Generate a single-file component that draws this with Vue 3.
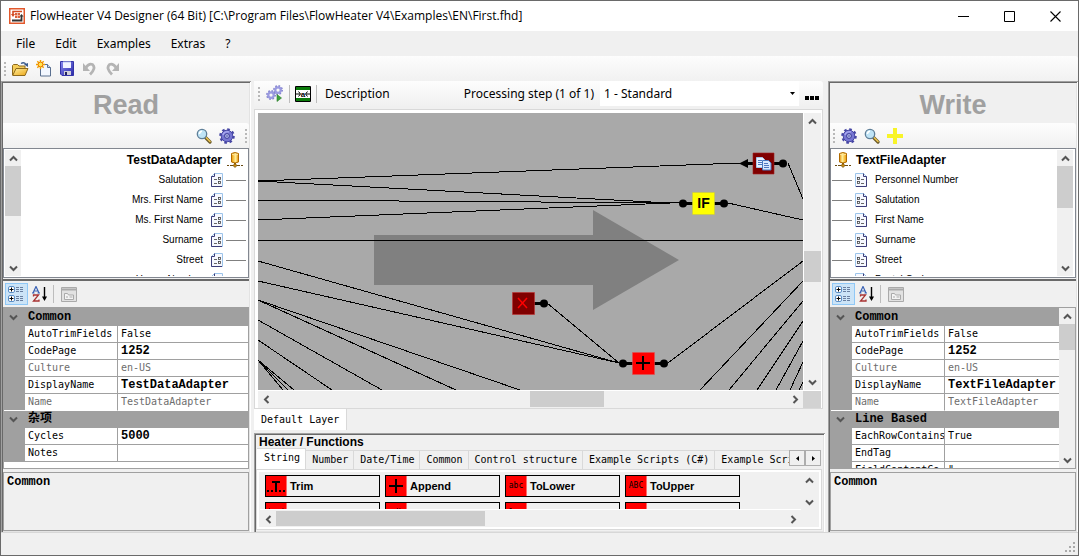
<script setup>
import { ref } from 'vue'

const menus = ['File', 'Edit', 'Examples', 'Extras', '?']

const panels = [
  {
    side: 'read',
    title: 'Read',
    adapter: 'TestDataAdapter',
    fields: ['Salutation', 'Mrs. First Name', 'Ms. First Name', 'Surname', 'Street', 'House Number'],
    groups: [
      {
        name: 'Common',
        rows: [
          { key: 'AutoTrimFields', value: 'False' },
          { key: 'CodePage', value: '1252', bold: true },
          { key: 'Culture', value: 'en-US', muted: true },
          { key: 'DisplayName', value: 'TestDataAdapter', bold: true },
          { key: 'Name', value: 'TestDataAdapter', muted: true }
        ]
      },
      {
        name: '杂项',
        rows: [
          { key: 'Cycles', value: '5000', bold: true },
          { key: 'Notes', value: '' }
        ]
      }
    ]
  },
  {
    side: 'write',
    title: 'Write',
    adapter: 'TextFileAdapter',
    fields: ['Personnel Number', 'Salutation', 'First Name', 'Surname', 'Street', 'Postal Code'],
    scroll: true,
    groups: [
      {
        name: 'Common',
        rows: [
          { key: 'AutoTrimFields', value: 'False' },
          { key: 'CodePage', value: '1252', bold: true },
          { key: 'Culture', value: 'en-US', muted: true },
          { key: 'DisplayName', value: 'TextFileAdapter', bold: true },
          { key: 'Name', value: 'TextFileAdapter', muted: true }
        ]
      },
      {
        name: 'Line Based',
        rows: [
          { key: 'EachRowContains', value: 'True' },
          { key: 'EndTag', value: '' },
          { key: 'FieldContentCo', value: '"' }
        ]
      }
    ]
  }
]

const wires = [
  [0, 68, 482, 50], [0, 68, 412, 90], [0, 87, 424, 90], [0, 107, 412, 90], [0, 127, 545, 127],
  [0, 148, 361, 250], [0, 168, 361, 250], [0, 187, 262, 277], [0, 187, 198, 277],
  [0, 207, 124, 277], [0, 227, 74, 277], [0, 247, 36, 277], [0, 247, 30, 277], [0, 247, 25, 277],
  [289, 190, 361, 250], [470, 90, 545, 107], [530, 50, 545, 86], [410, 250, 545, 148],
  [442, 277, 545, 168], [471, 277, 545, 188], [499, 277, 545, 208], [518, 277, 545, 228],
  [532, 277, 545, 249], [541, 277, 545, 269]
]

const tabs = ['String', 'Number', 'Date/Time', 'Common', 'Control structure', 'Example Scripts (C#)', 'Example Scripts (VB)']
const activeTab = ref('String')

const functions = [
  { icon: 'dots', label: 'Trim' },
  { icon: 'plus', label: 'Append' },
  { icon: 'abc', label: 'ToLower' },
  { icon: 'ABC', label: 'ToUpper' },
  { icon: '(..)', label: 'SubString' },
  { icon: 'a/b', label: 'Replace' },
  { icon: 'len', label: 'Length' },
  { icon: '', label: 'Concat' }
]
</script>

<template>
  <div class="window">
    <svg class="defs" aria-hidden="true">
      <defs>
        <linearGradient id="g-folder" x1="0" y1="0" x2="1" y2="1">
          <stop offset="0" stop-color="#fff0a0" /><stop offset="1" stop-color="#eba414" />
        </linearGradient>
        <linearGradient id="g-blue" x1="0" y1="0" x2="1" y2="1">
          <stop offset="0" stop-color="#8a8af0" /><stop offset="1" stop-color="#2828a8" />
        </linearGradient>
        <linearGradient id="g-gold" x1="0" y1="0" x2="1" y2="0">
          <stop offset="0" stop-color="#e88a00" /><stop offset=".4" stop-color="#fff09a" /><stop offset="1" stop-color="#f09a00" />
        </linearGradient>
      </defs>
      <symbol id="i-up" viewBox="0 0 9 7"><path d="M1 5.500 4.500 2 8 5.500" fill="none" stroke="#555" stroke-width="2" /></symbol>
      <symbol id="i-down" viewBox="0 0 9 7"><path d="M1 1.500 4.500 5 8 1.500" fill="none" stroke="#555" stroke-width="2" /></symbol>
      <symbol id="i-left" viewBox="0 0 7 9"><path d="M5.500 1 2 4.500 5.500 8" fill="none" stroke="#555" stroke-width="2" /></symbol>
      <symbol id="i-right" viewBox="0 0 7 9"><path d="M1.500 1 5 4.500 1.500 8" fill="none" stroke="#555" stroke-width="2" /></symbol>
      <symbol id="i-gear" viewBox="0 0 16 16">
        <circle cx="8" cy="8" r="6.600" fill="none" stroke="#4646a4" stroke-width="2.400" stroke-dasharray="2.600 2.584" />
        <circle cx="8" cy="8" r="5.800" fill="#7676d2" stroke="#4646a4" stroke-width="1" />
        <path d="M4 7a4.500 4.500 0 0 1 6-3" fill="none" stroke="#a8a8f0" stroke-width="1.500" />
        <circle cx="8" cy="8" r="2.400" fill="#b8c0f0" stroke="#3c3c96" stroke-width="1" />
        <circle cx="8" cy="8" r=".8" fill="#3c3c96" />
      </symbol>
      <symbol id="i-gear-light" viewBox="0 0 16 16">
        <circle cx="8" cy="8" r="6.200" fill="none" stroke="#8080cc" stroke-width="3.400" stroke-dasharray="2.440 2.430" />
        <circle cx="8" cy="8" r="4.400" fill="none" stroke="#9a9ae0" stroke-width="3.600" />
      </symbol>
      <symbol id="i-search" viewBox="0 0 16 16">
        <path d="m9.500 9.500 4.500 4.500" stroke="#6b5a28" stroke-width="3.200" stroke-linecap="round" />
        <path d="m10 9.500 4 4" stroke="#f0c850" stroke-width="1.500" stroke-linecap="round" />
        <circle cx="6" cy="6" r="4.700" fill="#bfe4f6" stroke="#5f7f98" stroke-width="1.300" />
        <path d="M3.500 6A2.600 2.600 0 0 1 6 3.300" fill="none" stroke="#fff" stroke-width="1.600" />
      </symbol>
      <symbol id="i-db" viewBox="0 0 16 16">
        <path d="M0 13.500h2M3 13.500h10M14 13.500h2" stroke="#6a4a10" />
        <path d="M8 10v4" stroke="#8a5a00" stroke-width="2" />
        <path d="m6 13.500 2-2 2 2-2 2z" fill="#c88a10" stroke="#6a4a10" stroke-width=".7" />
        <path d="M4.500 1.500Q8-.5 11.500 1.500v8.500Q8 12 4.500 10z" fill="url(#g-gold)" stroke="#b06a00" />
        <path d="M5 2.200Q8 4 11 2.200" fill="none" stroke="#ffe9a0" />
      </symbol>
      <symbol id="i-field" viewBox="0 0 12 14">
        <path d="M.5.500h8l3 3v10H.5z" fill="#f6f8ff" stroke="#9cc4ea" />
        <path d="M8.500.500v3h3v10H1" fill="none" stroke="#3c3c78" />
        <rect x="2.500" y="4.500" width="2" height="2" fill="none" stroke="#444" stroke-width=".8" />
        <rect x="2.500" y="8.500" width="2" height="2" fill="none" stroke="#444" stroke-width=".8" />
        <path d="M6 6.500h3M6 10.500h3" stroke="#666" />
      </symbol>
      <symbol id="i-cat" viewBox="0 0 18 16">
        <rect x=".5" y=".5" width="6" height="6" rx="1.500" fill="#fff" stroke="#5b8fc8" />
        <path d="M1.500 3.500h4M3.500 1.500v4" stroke="#000" />
        <rect x=".5" y="9.500" width="6" height="6" rx="1.500" fill="#fff" stroke="#5b8fc8" />
        <path d="M1.500 12.500h4M3.500 10.500v4" stroke="#000" />
        <path d="M8 1.500h8M8 3.500h8M8 5.500h8M8 10.500h8M8 12.500h8M8 14.500h8" stroke="#6a7fa0" stroke-dasharray="3 1" />
      </symbol>
      <symbol id="i-az" viewBox="0 0 16 16">
        <path d="M1 7 4 .5 7 7M2 5h4M0 7h2.500M5.500 7H8" fill="none" stroke="#3a62b4" stroke-width="1.200" />
        <path d="M1.500 10.500V9h5L1.500 15h5.500v-1.500" fill="none" stroke="#a83232" stroke-width="1.300" />
        <path d="M12.500 1v12" stroke="#000" stroke-width="1.400" /><path d="M10 10.500h5L12.500 15z" />
      </symbol>
      <symbol id="i-pages" viewBox="0 0 16 15">
        <path d="M.5.500h15v14H.5z" fill="#e2e2e2" stroke="#aaa" /><path d="M1 2.500h14" stroke="#aaa" stroke-width="2" />
        <path d="M3.500 12.500v-6h3l1 1.500h5v4.500z" fill="#f4f4f4" stroke="#aaa" /><path d="M5 10h2M8.500 10h3" stroke="#aaa" />
      </symbol>
    </svg>

    <header class="titlebar">
      <svg class="logo" width="16" height="16" viewBox="0 0 16 16">
        <rect x=".75" y=".75" width="14.500" height="14.500" fill="#fff" stroke="#e2582c" stroke-width="1.500" />
        <path d="M4 6.500v-3h9" fill="none" stroke="#d44a22" stroke-width="1.600" /><path d="M2 6h4L4 9z" fill="#d44a22" />
        <path d="M3 12.500h9.500V8" fill="none" stroke="#333" stroke-width="1.800" /><path d="M10.500 8.500 12.500 6l2 2.500z" fill="#333" />
        <rect x="6" y="5" width="5" height="5" fill="#d9613e" /><path d="M6 7.500h5M8.500 5v5" stroke="#f6c8b6" stroke-width=".8" />
      </svg>
      <h1>FlowHeater V4 Designer (64 Bit) [C:\Program Files\FlowHeater V4\Examples\EN\First.fhd]</h1>
      <div class="controls">
        <button type="button" aria-label="Minimize"><svg width="11" height="11"><path d="M0 5.500h11" stroke="#000" /></svg></button>
        <button type="button" aria-label="Maximize"><svg width="11" height="11"><path d="M.5.500h10v10H.5z" fill="none" stroke="#000" /></svg></button>
        <button type="button" aria-label="Close"><svg width="11" height="11"><path d="m.5.500 10 10m0-10-10 10" stroke="#000" stroke-width="1.100" /></svg></button>
      </div>
    </header>

    <nav class="menubar">
      <button v-for="m in menus" :key="m" type="button">{{ m }}</button>
    </nav>

    <div class="strip main-strip">
      <i class="grip"></i>
      <button type="button" aria-label="Open">
        <svg width="17" height="16" viewBox="0 0 17 16">
          <path d="M.5 14V4.500l1-1h4l1.500 1.500h6v3" fill="#f4cc58" stroke="#8e6a1c" />
          <path d="M.7 14.500 4 7.500h12l-3 7z" fill="url(#g-folder)" stroke="#8e6a1c" />
          <path d="M9 2.500Q12 .5 14 3.500" fill="none" stroke="#3a5a8c" stroke-width="1.300" /><path d="M12 3.500 16 2v4z" fill="#3a5a8c" />
        </svg>
      </button>
      <button type="button" aria-label="New">
        <svg width="16" height="17" viewBox="0 0 16 17">
          <path d="M4.500 4.500h7l3 3v8.500h-10z" fill="#f2f7ff" stroke="#5a7090" /><path d="M11.500 4.500v3h3" fill="#c8d8ec" stroke="#5a7090" />
          <path d="M4.500 0v9M0 4.500h9M1.300 1.300l6.400 6.400M7.700 1.300 1.300 7.700" stroke="#f0a400" stroke-width="1.500" /><circle cx="4.500" cy="4.500" r="2.400" fill="#ffe850" stroke="#f07800" />
        </svg>
      </button>
      <button type="button" aria-label="Save">
        <svg width="14" height="15" viewBox="0 0 14 15">
          <path d="M.5.500h13v14H2l-1.500-1.500z" fill="url(#g-blue)" stroke="#3434a8" /><path d="M3 1h8v6H3z" fill="#f2f4ff" /><path d="M3 1h8" stroke="#b8c4f0" />
          <path d="M4 10h7v4H4z" fill="#d0d0d8" /><path d="M5 11h2v3H5z" fill="#222260" />
        </svg>
      </button>
      <button type="button" aria-label="Undo" disabled>
        <svg width="13" height="14" viewBox="0 0 13 14"><path d="M3 5.500Q6 1 9.500 2.500 13.500 6 7 12.500" fill="none" stroke="#b4b4b4" stroke-width="2.800" /><path d="M0 1v8h7z" fill="#b4b4b4" /></svg>
      </button>
      <button type="button" aria-label="Redo" disabled>
        <svg width="13" height="14" viewBox="0 0 13 14"><path d="M10 5.500Q7 1 3.500 2.500-.5 6 6 12.500" fill="none" stroke="#b4b4b4" stroke-width="2.800" /><path d="M13 1v8H6z" fill="#b4b4b4" /></svg>
      </button>
    </div>

    <main class="body">
      <section v-for="p in panels" :key="p.side" class="panel" :class="p.side">
        <h2>{{ p.title }}</h2>
        <div class="strip side-strip">
          <i class="grip"></i>
          <button type="button" aria-label="Configure"><svg width="16" height="16"><use href="#i-gear" /></svg></button>
          <button type="button" aria-label="Search"><svg width="16" height="16"><use href="#i-search" /></svg></button>
          <button v-if="p.side === 'write'" type="button" aria-label="Add"><svg width="16" height="16"><path d="M8 0v16M0 8h16" stroke="#f8f428" stroke-width="4" /></svg></button>
        </div>
        <div class="fields">
          <ul>
            <li class="adapter"><svg width="16" height="16"><use href="#i-db" /></svg><span>{{ p.adapter }}</span></li>
            <li v-for="f in p.fields" :key="f"><i class="wire"></i><svg width="12" height="14"><use href="#i-field" /></svg><span>{{ f }}</span></li>
          </ul>
          <div class="vscroll">
            <button type="button" aria-label="Scroll up"><svg width="9" height="7"><use href="#i-up" /></svg></button>
            <div class="track"><i class="thumb"></i></div>
            <button type="button" aria-label="Scroll down"><svg width="9" height="7"><use href="#i-down" /></svg></button>
          </div>
        </div>
        <div class="prop-strip">
          <button type="button" class="on" aria-label="Categorized"><svg width="18" height="16"><use href="#i-cat" /></svg></button>
          <button type="button" aria-label="Alphabetical"><svg width="16" height="16"><use href="#i-az" /></svg></button>
          <i class="sep"></i>
          <button type="button" aria-label="Property pages" disabled><svg width="16" height="15"><use href="#i-pages" /></svg></button>
        </div>
        <div class="props">
          <div class="props-view">
            <table>
              <colgroup><col class="c-gutter" /><col class="c-key" /><col /></colgroup>
              <tbody v-for="g in p.groups" :key="g.name">
                <tr class="group">
                  <td><svg width="9" height="7"><use href="#i-down" /></svg></td>
                  <th colspan="2" scope="rowgroup">{{ g.name }}</th>
                </tr>
                <tr v-for="r in g.rows" :key="r.key" :class="{ muted: r.muted }">
                  <td class="gutter"></td>
                  <th scope="row">{{ r.key }}</th>
                  <td :class="{ bold: r.bold }">{{ r.value }}</td>
                </tr>
              </tbody>
            </table>
          </div>
          <div v-if="p.scroll" class="vscroll">
            <button type="button" aria-label="Scroll up"><svg width="9" height="7"><use href="#i-up" /></svg></button>
            <div class="track"><i class="thumb"></i></div>
            <button type="button" aria-label="Scroll down"><svg width="9" height="7"><use href="#i-down" /></svg></button>
          </div>
        </div>
        <div class="hint">Common</div>
      </section>

      <section class="center">
        <div class="strip center-strip">
          <i class="grip"></i>
          <button type="button" aria-label="Run">
            <svg width="18" height="17" viewBox="0 0 18 17">
              <svg x="0" y="5" width="10" height="10"><use href="#i-gear-light" /></svg>
              <svg x="7" y="0" width="10" height="10"><use href="#i-gear-light" /></svg>
              <path d="m11 9.500 4.500 3.500-4.500 3.500z" fill="#3ca03c" stroke="#2a7a2a" stroke-width=".6" />
            </svg>
          </button>
          <i class="sep"></i>
          <button type="button" aria-label="Parameter">
            <svg width="16" height="16" viewBox="0 0 16 16">
              <path d="M.5.500h15v15H.5z" fill="#fff" stroke="#000" /><path d="M1 2.500h14M1 13.500h14" stroke="#0a7a0a" stroke-width="3" />
              <path d="M1 8h4M11 8h4M3.500 5.500 5.500 8l-2 2.500M12.500 5.500l-2 2.500 2 2.500" fill="none" stroke="#000" />
              <text x="8" y="10.500" text-anchor="middle" font-size="8" font-weight="bold" font-family="Liberation Sans, sans-serif">a</text>
            </svg>
          </button>
          <i class="sep"></i>
          <button type="button" class="text">Description</button>
          <label for="step">Processing step (1 of 1)</label>
          <div class="combo">
            <select id="step"><option>1 - Standard</option></select>
            <svg width="5" height="3"><path d="M0 0h5L2.500 3z" /></svg>
          </div>
          <button type="button" class="more" aria-label="More"><svg width="14" height="4"><path d="M0 0h4v4H0zM5 0h4v4H5zM10 0h4v4h-4z" /></svg></button>
        </div>

        <div class="designer">
          <div class="canvas">
            <svg width="545" height="277">
              <path d="M116 122H335V97L421 147 335 197V172H116z" fill="#808080" />
              <g stroke="#000" shape-rendering="crispEdges">
                <line v-for="(w, i) in wires" :key="i" :x1="w[0]" :y1="w[1]" :x2="w[2]" :y2="w[3]" />
              </g>
              <g stroke="#000" stroke-width="3">
                <path d="M490 50.500h36M425 90.500h40M276 190.500h10M364 250.500h41" />
              </g>
              <circle cx="525" cy="50.500" r="4" /><path d="m481 50.500 9-4.500v9z" />
              <circle cx="425" cy="90.500" r="4" /><circle cx="466" cy="90.500" r="4" />
              <circle cx="286" cy="190.500" r="4" />
              <circle cx="365" cy="250.500" r="4" /><circle cx="406" cy="250.500" r="4" />
              <g stroke-opacity=".6">
                <path d="M495 40h21v21h-21z" fill="#800000" stroke="#a02020" />
                <path d="M434.500 79.500h22v22h-22z" fill="#ff0" stroke="#c8c840" />
                <path d="M254.500 179.500h22v22h-22z" fill="#800000" stroke="#c03030" />
                <path d="M374.500 239.500h22v22h-22z" fill="#f00" stroke="#e05050" />
              </g>
              <path d="M498.500 44.500h6l2 2v8h-8z" fill="#e8f2ff" stroke="#a8c4e8" /><path d="M500 47.500h4M500 49.500h5M500 51.500h5" stroke="#5078c0" />
              <path d="M504.500 47.500h6l2.500 2.500v7h-8.500z" fill="#d8e8ff" stroke="#4878c0" /><path d="M506 50.500h4M506 52.500h5M506 54.500h5" stroke="#5078c0" />
              <text x="445.500" y="95" text-anchor="middle" class="if">IF</text>
              <path d="m260 185 9 10m0-10-9 10" stroke="#f00" stroke-width="1.500" />
              <path d="M385 243v14M378 250h14" stroke="#000" stroke-width="2" />
            </svg>
          </div>
          <div class="vscroll">
            <button type="button" aria-label="Scroll up"><svg width="9" height="7"><use href="#i-up" /></svg></button>
            <div class="track"><i class="thumb"></i></div>
            <button type="button" aria-label="Scroll down"><svg width="9" height="7"><use href="#i-down" /></svg></button>
          </div>
          <div class="hscroll">
            <button type="button" aria-label="Scroll left"><svg width="7" height="9"><use href="#i-left" /></svg></button>
            <div class="track"><i class="thumb"></i></div>
            <button type="button" aria-label="Scroll right"><svg width="7" height="9"><use href="#i-right" /></svg></button>
          </div>
          <i class="corner"></i>
        </div>
        <div class="layers"><button type="button">Default Layer</button></div>

        <div class="heater">
          <h3>Heater / Functions</h3>
          <div class="tabrow">
            <div class="tabs" role="tablist">
              <button v-for="t in tabs" :key="t" type="button" role="tab" :aria-selected="t === activeTab" :class="{ active: t === activeTab }" @click="activeTab = t">{{ t }}</button>
            </div>
            <div class="spin">
              <button type="button" aria-label="Previous tabs"><svg width="3" height="5"><path d="M3 0v5L0 2.500z" /></svg></button>
              <button type="button" aria-label="More tabs"><svg width="3" height="5"><path d="M0 0v5l3-2.500z" /></svg></button>
            </div>
          </div>
          <div class="page">
            <div class="functions">
              <button v-for="f in functions" :key="f.label" type="button">
                <span class="tile">
                  <svg v-if="f.icon === 'plus'" width="14" height="14"><path d="M7 0v14M0 7h14" stroke="#000" stroke-width="2" /></svg>
                  <svg v-else-if="f.icon === 'dots'" width="18" height="12"><path d="M5 2h8M9 2v10" stroke="#000" stroke-width="2" /><path d="M0 10h2v2H0zM4 10h2v2H4zM12 10h2v2h-2zM16 10h2v2h-2z" /></svg>
                  <template v-else>{{ f.icon }}</template>
                </span>
                <span>{{ f.label }}</span>
              </button>
            </div>
            <div class="vscroll">
              <button type="button" aria-label="Scroll up"><svg width="9" height="7"><use href="#i-up" /></svg></button>
              <div class="track"></div>
              <button type="button" aria-label="Scroll down"><svg width="9" height="7"><use href="#i-down" /></svg></button>
            </div>
            <div class="hscroll">
              <button type="button" aria-label="Scroll left"><svg width="7" height="9"><use href="#i-left" /></svg></button>
              <div class="track"><i class="thumb"></i></div>
              <button type="button" aria-label="Scroll right"><svg width="7" height="9"><use href="#i-right" /></svg></button>
            </div>
          </div>
        </div>
      </section>
    </main>

    <footer class="status">
      <svg width="11" height="11"><path d="M8 0h2v2H8zM4 4h2v2H4zM8 4h2v2H8zM0 8h2v2H0zM4 8h2v2H4zM8 8h2v2H8z" fill="#aaa" /></svg>
    </footer>
  </div>
</template>

<style>
html, body { margin: 0; background: #f0f0f0; }
</style>

<style scoped>
.window, .window * { box-sizing: border-box; }
.window {
  --mono: "DejaVu Sans Mono", "Noto Sans CJK SC", monospace;
  --mono-bold: "Liberation Mono", "Noto Sans CJK SC", monospace;
  --sans: "Liberation Sans", "Noto Sans CJK SC", sans-serif;
  display: flex; flex-direction: column; height: 100vh;
  border: 1px solid #6a6a6a; background: #f0f0f0; color: #000;
  font: 12px/16px "Noto Sans", "Noto Sans CJK SC", sans-serif;
}
.defs { position: absolute; width: 0; height: 0; }
button { margin: 0; padding: 0; border: 0; background: none; font: inherit; color: inherit; display: flex; align-items: center; justify-content: center; flex: none; white-space: nowrap; }
svg { display: block; flex: none; }
h1, h2, h3, ul { margin: 0; padding: 0; font-weight: normal; list-style: none; }

.titlebar { display: flex; align-items: center; height: 30px; padding-left: 8px; background: #fff; flex: none; }
.titlebar h1 { flex: 1; margin-left: 5px; font: 12px/16px "Open Sans", "Noto Sans", sans-serif; white-space: nowrap; overflow: hidden; }
.controls { display: flex; }
.controls button { width: 46px; height: 30px; }
.menubar { display: flex; align-items: center; height: 25px; padding-left: 7px; flex: none; }
.menubar button { padding: 0 12px 0 8px; height: 25px; }

.strip { display: flex; align-items: center; height: 25px; flex: none; background: linear-gradient(#fdfdfd, #f1f1f1); border-radius: 0 3px 3px 0; }
.grip { width: 2px; height: 14px; flex: none; background: repeating-linear-gradient(#b8b8b8 0 2px, transparent 2px 4px); }
.sep { width: 1px; height: 18px; background: #bdbdbd; flex: none; }
.main-strip { padding-left: 3px; }
.main-strip button { width: 23px; }
.main-strip .grip { margin-right: 3px; }

.body { flex: 1; min-height: 0; display: grid; grid-template-columns: 250px minmax(0, 1fr) 250px; gap: 3px; }
.panel, .heater {
  padding: 2px; border: 0; min-height: 0;
  box-shadow: inset 1px 1px 0 #a0a0a0, inset -1px -1px 0 #fff, inset 2px 2px 0 #696969, inset -2px -2px 0 #e3e3e3;
}
.panel { display: flex; flex-direction: column; min-width: 0; grid-row: 1; grid-column: 1; }
.panel.write { grid-column: 3; }
.center { grid-row: 1; grid-column: 2; }
.panel h2 { height: 40px; padding-top: 2px; text-align: center; font: bold 27px/40px var(--sans); color: #a0a0a0; flex: none; }
.side-strip { padding-left: 3px; }
.side-strip .grip { margin-right: 2px; }
.side-strip button { width: 23px; }
.read .side-strip { flex-direction: row-reverse; padding: 0 2px 0 0; }
.read .side-strip .grip { margin: 0 0 0 7px; }

.fields { display: flex; height: 130px; flex: none; padding: 1px 2px 1px 1px; border: 1px solid #828790; background: #fff; }
.read .fields { flex-direction: row-reverse; }
.fields ul { flex: 1; overflow: hidden; font: 10px/20px var(--sans); }
.fields li { display: flex; align-items: center; height: 20px; white-space: nowrap; }
.read .fields li { flex-direction: row-reverse; }
.read .fields li svg { transform: scaleX(-1); }
.fields .wire { width: 20px; height: 1px; background: #808080; margin-right: 3px; }
.fields li span { margin: 0 8px; }
.read .fields .wire { margin: 0 0 0 3px; }
.fields .adapter { font-size: 12px; font-weight: bold; padding: 0 3px; }
.fields .adapter span { margin: 0 5px; }

.vscroll { display: flex; flex-direction: column; width: 16px; background: #f0f0f0; flex: none; }
.vscroll button { height: 16px; }
.hscroll { display: flex; height: 16px; background: #f0f0f0; }
.hscroll button { width: 16px; }
.track { flex: 1; min-width: 0; min-height: 0; }
.thumb { display: block; background: #cdcdcd; }
.read .fields .thumb { height: 50px; }
.write .fields .thumb { height: 42px; }
.props .thumb { height: 26px; }

.prop-strip { display: flex; align-items: center; height: 28px; flex: none; padding: 0 2px; border-top: 2px solid #696969; margin-top: 1px; }
.prop-strip button { width: 23px; height: 22px; }
.prop-strip .on { background: #cce4f7; border: 1px solid #90c8f6; }
.prop-strip .sep { margin: 0 3px 0 2px; }

.props { flex: 1; min-height: 0; display: flex; border: 1px solid #a0a0a0; background: #fff; }
.props-view { flex: 1; min-width: 0; overflow: hidden; border-top: 1px solid #a0a0a0; }
table { width: 100%; table-layout: fixed; border-spacing: 0; font: 10px/16px var(--mono); }
.c-gutter { width: 21px; }
.c-key { width: 93px; }
tr { height: 17px; }
th, td { padding: 0 0 0 3px; text-align: left; font-weight: normal; white-space: nowrap; overflow: hidden; border-bottom: 1px solid #a0a0a0; height: 17px; line-height: 16px; }
th { border-right: 1px solid #a0a0a0; }
.gutter, .group td, .group th { background: #a0a0a0; }
.group td { padding-left: 5px; }
.group th, .bold { font: bold 12px/16px var(--mono-bold); }
.muted { color: #6d6d6d; }
tbody:not(:last-child) tr:last-child td, tbody:not(:last-child) tr:last-child th { border-bottom-color: #fff; }
.hint { height: 59px; margin-top: 3px; padding: 1px 3px; border: 1px solid #a0a0a0; flex: none; font: bold 12px/16px var(--mono-bold); }

.center { display: flex; flex-direction: column; min-width: 0; }
.center-strip { padding-left: 4px; margin-right: 2px; height: 25px; }
.center-strip .grip { margin-right: 6px; }
.center-strip .sep { margin: 0 5px; }
.center-strip .text { margin: 0 auto 0 3px; }
.combo { position: relative; width: 199px; height: 25px; margin: 0 6px; background: #fff; }
.combo select { width: 100%; height: 100%; padding: 0 4px; border: 0; background: none; appearance: none; font: inherit; color: inherit; }
.combo svg { position: absolute; right: 4px; top: 11px; }
.more { padding: 9px 4px 0 0; }

.designer { flex: 1; min-height: 0; margin: 3px 2px 0 0; padding: 3px 1px 0 3px; display: grid; grid-template: minmax(0, 1fr) 17px / minmax(0, 1fr) 18px; row-gap: 1px; border: 1px solid #d9d9d9; background: #fff; }
.canvas { background: #a9a9a9; overflow: hidden; }
.if { font: bold 14px var(--sans); }
.designer .vscroll { width: 17px; margin-left: 1px; }
.designer .vscroll .track { padding-top: 122px; }
.designer .vscroll .thumb { height: 31px; }
.designer .hscroll { height: 17px; }
.designer .hscroll .track { padding-left: 256px; }
.designer .hscroll .thumb { width: 74px; height: 16px; }
.corner { background: #d2d2d2; }
.layers { height: 24px; flex: none; font: 10px/20px var(--mono); }
.layers button { height: 21px; padding: 0 7px; background: #fff; border-right: 1px solid #d9d9d9; }

.heater { display: flex; flex-direction: column; height: 100px; flex: none; }
.heater h3 { padding-left: 3px; font: bold 12px/14px var(--sans); }
.tabrow { display: flex; align-items: flex-end; height: 21px; padding: 0 1px; margin: -1px 1px 0 0; }
.tabs { flex: 1; min-width: 0; display: flex; align-items: flex-end; height: 21px; overflow: hidden; font: 10px/16px var(--mono); }
.tabs button { height: 19px; padding: 0 5px 0 6px; border: 1px solid #d9d9d9; border-width: 1px 1px 0 0; }
.tabs .active { height: 21px; padding: 0 5px 3px 7px; background: #fff; border-width: 1px 1px 0 0; }
.spin { display: flex; height: 16px; align-self: flex-start; margin-top: 2px; }
.spin button { width: 16px; border: 1px solid #adadad; background: #f0f0f0; }
.page { flex: 1; min-height: 0; display: grid; grid-template: minmax(0, 1fr) 16px / minmax(0, 1fr) 17px; row-gap: 1px; border: 1px solid #d9d9d9; box-shadow: inset 0 0 0 2px #fff; padding: 2px 3px; margin: 0 1px 1px 0; }
.functions { display: grid; grid-template-columns: repeat(4, 115px); gap: 5px; align-content: start; padding: 3px 5px 0; overflow: hidden; border-bottom: 1px solid #fff; font: bold 11px/20px var(--sans); }
.functions button { height: 22px; justify-content: flex-start; gap: 3px; border: 1px solid #000; }
.tile { display: flex; align-items: center; justify-content: center; width: 21px; height: 20px; background: #f00; border-right: 1px solid #ff6a6a; font: 8px/20px var(--mono); flex: none; }
.page .hscroll .thumb { width: 209px; height: 15px; }

.status { display: flex; justify-content: flex-end; align-items: flex-end; height: 23px; flex: none; padding: 0 2px 2px 0; border-top: 1px solid #d7d7d7; }
</style>
